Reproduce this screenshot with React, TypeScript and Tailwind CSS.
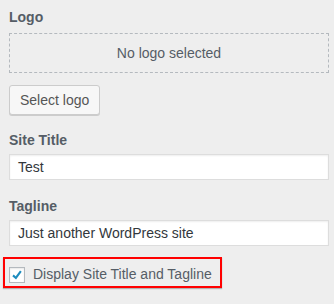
export default function App() {
  const font = { fontFamily: '"Liberation Sans", Arial, sans-serif' };
  return (
    <div
      className="w-[334px] h-[304px] bg-[#eeeeee] text-[14px] text-[#32373c] pl-[9px] pr-[5px] pt-[7px] overflow-hidden"
      style={font}
    >
      <div className="font-bold text-[#555d66] leading-[20px]">Logo</div>
      <div className="mt-[6px] h-[40px] border border-dashed border-[#b4b9be] flex items-center justify-center text-[#555d66]">
        No logo selected
      </div>
      <button className="mt-[12px] h-[30px] px-[10px] bg-[#f7f7f7] border border-[#cccccc] rounded-[3px] shadow-[0_1px_0_#cccccc] text-[#555555] text-[14px] leading-[28px]">
        Select logo
      </button>

      <div className="mt-[15px] font-bold text-[#555d66] leading-[20px]">Site Title</div>
      <div className="mt-[4px] h-[26px] bg-white border border-[#dddddd] shadow-[inset_0_1px_2px_rgba(0,0,0,0.07)] flex items-center px-[8px]">
        Test
      </div>

      <div className="mt-[16px] font-bold text-[#555d66] leading-[20px]">Tagline</div>
      <div className="mt-[4px] h-[26px] bg-white border border-[#dddddd] shadow-[inset_0_1px_2px_rgba(0,0,0,0.07)] flex items-center px-[8px]">
        Just another WordPress site
      </div>

      <div className="mt-[11px] -ml-[6px] w-[219px] h-[31px] border-[2.5px] border-[#ff0000] shadow-[0_1px_1px_rgba(0,0,0,0.25)] flex items-center pl-[4px] gap-[8px]">
        <span className="w-[16px] h-[16px] mt-[4px] bg-white border border-[#b4b9be] shadow-[inset_0_1px_2px_rgba(0,0,0,0.1)] flex items-center justify-center">
          <svg width="16" height="16" viewBox="0 0 20 20">
            <path d="M15.5 4.5 L8.4 14.2 L4.3 10.5" fill="none" stroke="#1e8cbe" strokeWidth="3" />
          </svg>
        </span>
        <span className="mt-[4px] text-[#555d66]">Display Site Title and Tagline</span>
      </div>
    </div>
  );
}
